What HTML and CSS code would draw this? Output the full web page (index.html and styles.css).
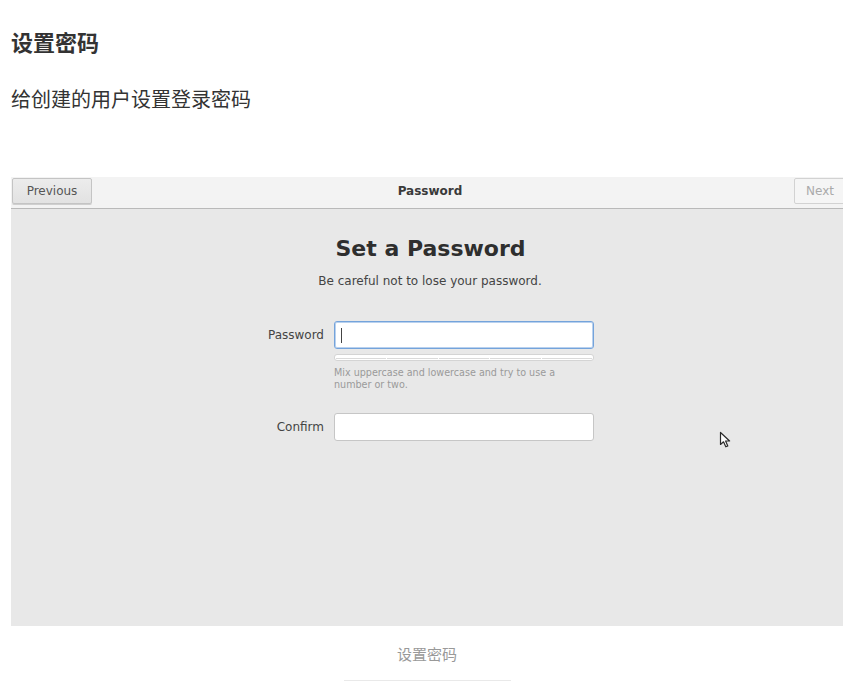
FILE: index.html
```html
<!DOCTYPE html>
<html lang="zh-CN">

<head>
    <meta charset="UTF-8">
    <meta name="viewport" content="width=device-width, initial-scale=1.0">
    <title>设置密码</title>
    <link rel="stylesheet" href="styles.css">
</head>

<body>
    <main class="article">
        <h3 class="section-title">设置密码</h3>
        <p class="section-text">给创建的用户设置登录密码</p>

        <figure class="shot">
            <div class="shot-frame">
                <div class="headerbar">
                    <button class="hb-btn prev-btn">Previous</button>
                    <div class="hb-title">Password</div>
                    <button class="hb-btn next-btn">Next</button>
                </div>
                <div class="page">
                    <h1 class="page-title">Set a Password</h1>
                    <p class="page-sub">Be careful not to lose your password.</p>

                    <div class="form">
                        <label class="field-label">Password</label>
                        <div class="entry focused"><span class="caret"></span></div>

                        <div class="strength">
                            <span class="seg"></span>
                            <span class="seg"></span>
                            <span class="seg"></span>
                            <span class="seg"></span>
                            <span class="seg"></span>
                        </div>
                        <p class="hint">Mix uppercase and lowercase and try to use a<br>number or two.</p>

                        <label class="field-label confirm-label">Confirm</label>
                        <div class="entry confirm-entry"></div>
                    </div>

                    <svg class="pointer" width="14" height="18" viewBox="0 0 14 18">
                        <path d="M1.5 1.5 L1.5 13.5 L4.5 10.8 L6.8 15.8 L8.8 14.9 L6.6 10 L10.6 10 Z" fill="#fff" stroke="#2b2b2b" stroke-width="1.2" stroke-linejoin="round"/>
                    </svg>
                </div>
            </div>
            <figcaption class="caption">设置密码</figcaption>
        </figure>
        <div class="caption-rule"></div>
    </main>
</body>

</html>
```

FILE: styles.css
```css
* {
    padding: 0px;
    margin: 0px;
    box-sizing: border-box;
}

body {
    background-color: #fff;
    font-family: 'Noto Sans CJK SC', 'Noto Sans', sans-serif;
    color: #333;
}

.article {
    padding: 0 14px 0 11px;
}

.section-title {
    font-size: 22px;
    font-weight: bold;
    line-height: 30px;
    margin-top: 26px;
    color: #333;
}

.section-text {
    font-size: 20px;
    line-height: 28px;
    margin-top: 29px;
    color: #333;
}

.shot {
    margin-top: 64px;
}

.shot-frame {
    width: 832px;
    height: 449px;
    display: flex;
    flex-direction: column;
    overflow: hidden;
    background-color: #e8e8e8;
    font-family: 'DejaVu Sans', sans-serif;
}

/* top bar of the installer */
.headerbar {
    height: 32px;
    display: grid;
    grid-template-columns: 1fr auto 1fr;
    align-items: start;
    padding-top: 1px;
    background-color: #f3f3f3;
    border-bottom: 1px solid #b9b9b9;
}

.hb-btn {
    height: 26px;
    font-family: 'DejaVu Sans', sans-serif;
    font-size: 12px;
    border: 1px solid #c4c4c4;
    border-radius: 2px;
    background: linear-gradient(#ececec, #e2e2e2);
    color: #555;
}

.prev-btn {
    width: 80px;
    margin-left: 1px;
    box-shadow: 0 1px 0 #cfcfcf;
}

.next-btn {
    justify-self: end;
    width: 60px;
    margin-right: -11px;
    padding-right: 8px;
    background: #f5f5f5;
    border-color: #d2d2d2;
    color: #aaa;
}

.hb-title {
    font-size: 12px;
    font-weight: bold;
    line-height: 26px;
    color: #3a3a3a;
    margin-left: 6px;
}

.page {
    flex: 1;
    position: relative;
}

.page-title {
    font-size: 22px;
    font-weight: bold;
    line-height: 26px;
    text-align: center;
    margin-top: 27px;
    padding-left: 7px;
    color: #2e2e2e;
}

.page-sub {
    font-size: 12px;
    line-height: 16px;
    text-align: center;
    margin-top: 11px;
    padding-left: 6px;
    color: #444;
}

.form {
    display: grid;
    grid-template-columns: 74px 260px;
    column-gap: 10px;
    margin-top: 32px;
    margin-left: 239px;
}

.field-label {
    grid-column: 1;
    font-size: 12px;
    line-height: 28px;
    text-align: right;
    color: #444;
}

.entry {
    grid-column: 2;
    height: 28px;
    background-color: #fff;
    border: 1px solid #c6c6c6;
    border-radius: 3px;
    display: flex;
    align-items: center;
    padding-left: 6px;
}

.entry.focused {
    border-color: #74a3db;
    box-shadow: 0 0 0 1px #b9d1ee inset;
}

.caret {
    width: 1px;
    height: 15px;
    background-color: #444;
}

.strength {
    grid-column: 2;
    height: 7px;
    margin-top: 5px;
    display: flex;
    gap: 1px;
    padding: 1px;
    border: 1px solid #d4d4d4;
    border-radius: 3px;
    background-color: #fff;
}

.seg {
    flex: 1;
    border-bottom: 1px solid #dadada;
}

.hint {
    grid-column: 2;
    font-size: 9.6px;
    line-height: 12px;
    margin-top: 6px;
    color: #9a9a9a;
}

.confirm-label,
.confirm-entry {
    margin-top: 22px;
}

.pointer {
    position: absolute;
    left: 708px;
    top: 222px;
}

.caption {
    text-align: center;
    font-size: 15px;
    line-height: 20px;
    margin-top: 18px;
    color: #999;
}

.caption-rule {
    width: 167px;
    height: 1px;
    margin: 16px 0 0 333px;
    background-color: #e9e9e9;
}
```
